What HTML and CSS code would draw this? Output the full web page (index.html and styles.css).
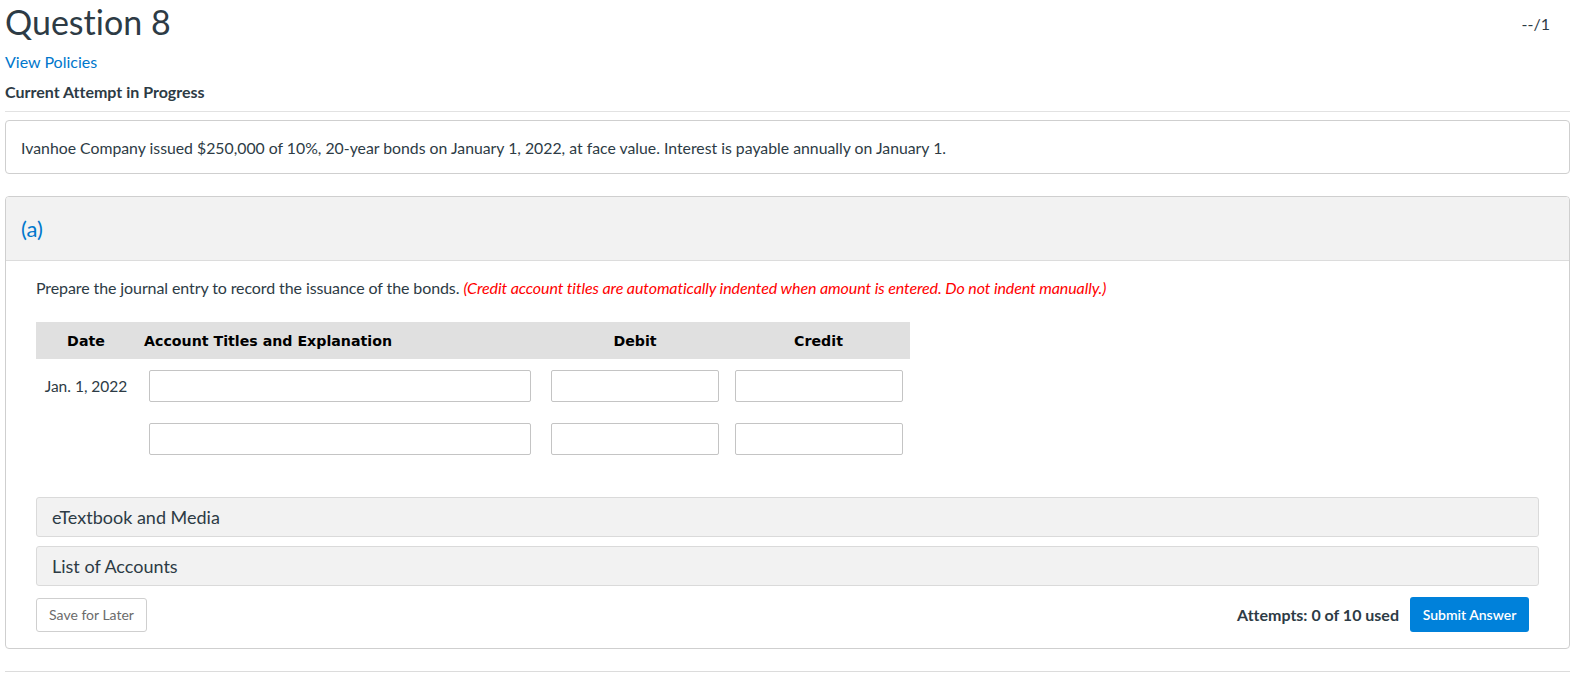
FILE: index.html
```html
<!DOCTYPE html>
<html>
<head>
<meta charset="utf-8">
<link rel="stylesheet" href="styles.css">
</head>
<body>
<div class="page">
  <div class="top">
    <h1 class="title">Question 8</h1>
    <div class="score">--/1</div>
  </div>
  <a class="policies" href="#">View Policies</a>
  <div class="attempt">Current Attempt in Progress</div>
  <div class="rule"></div>
  <div class="qbox">Ivanhoe Company issued $250,000 of 10%, 20-year bonds on January 1, 2022, at face value. Interest is payable annually on January 1.</div>
  <div class="part">
    <div class="part-head">(a)</div>
    <div class="part-body">
      <p class="prompt">Prepare the journal entry to record the issuance of the bonds. <em class="note">(Credit account titles are automatically indented when amount is entered. Do not indent manually.)</em></p>
      <div class="journal">
        <div class="jhead">
          <div class="c-date">Date</div>
          <div class="c-acct">Account Titles and Explanation</div>
          <div class="c-num">Debit</div>
          <div class="c-num">Credit</div>
        </div>
        <div class="jrow">
          <div class="c-date d-text">Jan. 1, 2022</div>
          <div class="c-acct"><input class="in-acct" type="text"></div>
          <div class="c-num"><input class="in-num" type="text"></div>
          <div class="c-num"><input class="in-num" type="text"></div>
        </div>
        <div class="jrow">
          <div class="c-date d-text"></div>
          <div class="c-acct"><input class="in-acct" type="text"></div>
          <div class="c-num"><input class="in-num" type="text"></div>
          <div class="c-num"><input class="in-num" type="text"></div>
        </div>
      </div>
      <div class="bar">eTextbook and Media</div>
      <div class="bar">List of Accounts</div>
      <div class="actions">
        <button class="btn-save">Save for Later</button>
        <div class="right">
          <span class="attempts">Attempts: 0 of 10 used</span>
          <button class="btn-submit">Submit Answer</button>
        </div>
      </div>
    </div>
  </div>
  <div class="rule bottom"></div>
</div>
</body>
</html>
```
FILE: styles.css
```css
* { box-sizing: border-box; }
html, body { margin: 0; padding: 0; background: #fff; }
body {
  font-family: Lato, "Open Sans", "Liberation Sans", sans-serif;
  font-variant-ligatures: none;
  color: #2d3b45;
  font-size: 16px;
}
.page { padding: 0 2px 0 5px; }
.top { display: flex; justify-content: space-between; align-items: flex-start; }
.title {
  margin: 0;
  font-size: 34px;
  font-weight: 400;
  line-height: 43px;
}
.score { font-size: 16px; margin-top: 14px; margin-right: 20px; }
.policies {
  display: block;
  margin-top: 9px;
  color: #0077cc;
  text-decoration: none;
  font-size: 16px;
  line-height: 20px;
}
.attempt {
  margin-top: 10px;
  font-weight: 700;
  font-size: 16px;
  line-height: 20px;
}
.rule { height: 1px; background: #e2e2e2; margin-top: 9px; }
.qbox {
  margin-top: 8px;
  border: 1px solid #cfcfcf;
  border-radius: 4px;
  padding: 16px 15px 15px;
  line-height: 21px;
  font-size: 15.8px;
}
.part {
  margin-top: 22px;
  border: 1px solid #cfcfcf;
  border-radius: 4px;
  overflow: hidden;
}
.part-head {
  background: #f2f2f2;
  border-bottom: 1px solid #dcdcdc;
  height: 64px;
  padding: 19px 15px 0;
  font-size: 22px;
  line-height: 26px;
  color: #0077cc;
}
.part-body { padding: 15px 30px 16px; }
.prompt { margin: 0; line-height: 24px; font-size: 16px; letter-spacing: -0.1px; }
.note { color: #ff0000; }
.journal { margin-top: 22px; width: 874px; }
.jhead {
  display: grid;
  grid-template-columns: 100px 407px 184px 183px;
  height: 37px;
  align-items: center;
  background: #e0e0e0;
  font-family: "DejaVu Sans", Verdana, sans-serif;
  font-weight: 700;
  font-size: 14.2px;
  color: #000;
}
.jhead .c-date, .jhead .c-num { text-align: center; }
.jhead .c-acct { padding-left: 8px; }
.jrow {
  display: grid;
  grid-template-columns: 100px 407px 184px 183px;
  align-items: center;
  margin-top: 11px;
}
.jrow + .jrow { margin-top: 21px; }
.d-text { text-align: center; font-size: 15.5px; }
.c-num { text-align: center; }
input {
  height: 32px;
  border: 1px solid #c4c4c4;
  border-radius: 2px;
  background: #fff;
  margin: 0;
  padding: 0 6px;
  font: inherit;
  display: block;
}
.in-acct { width: 382px; margin-left: 13px; }
.in-num { width: 168px; margin: 0 auto; }
.bar {
  margin-top: 9px;
  height: 40px;
  background: #f2f2f2;
  border: 1px solid #dadada;
  border-radius: 3px;
  padding: 0 15px;
  font-size: 18px;
  line-height: 38px;
  color: #2d3b45;
}
.journal + .bar { margin-top: 42px; }
.actions {
  margin-top: 11px;
  display: flex;
  justify-content: space-between;
  align-items: center;
}
.btn-save {
  height: 34px;
  width: 111px;
  background: #fff;
  border: 1px solid #cfcfcf;
  border-radius: 3px;
  color: #6b6b6b;
  font-family: Lato, sans-serif;
  font-size: 14px;
  padding: 0;
}
.right { display: flex; align-items: center; gap: 11px; margin-right: 10px; }
.attempts { font-weight: 700; font-size: 16px; }
.btn-submit {
  height: 35px;
  width: 119px;
  background: #0081da;
  border: 0;
  border-radius: 3px;
  color: #fff;
  font-family: Lato, sans-serif;
  font-size: 14px;
  font-weight: 600;
  padding: 0;
}
.rule.bottom { margin-top: 22px; background: #dcdcdc; }
```
